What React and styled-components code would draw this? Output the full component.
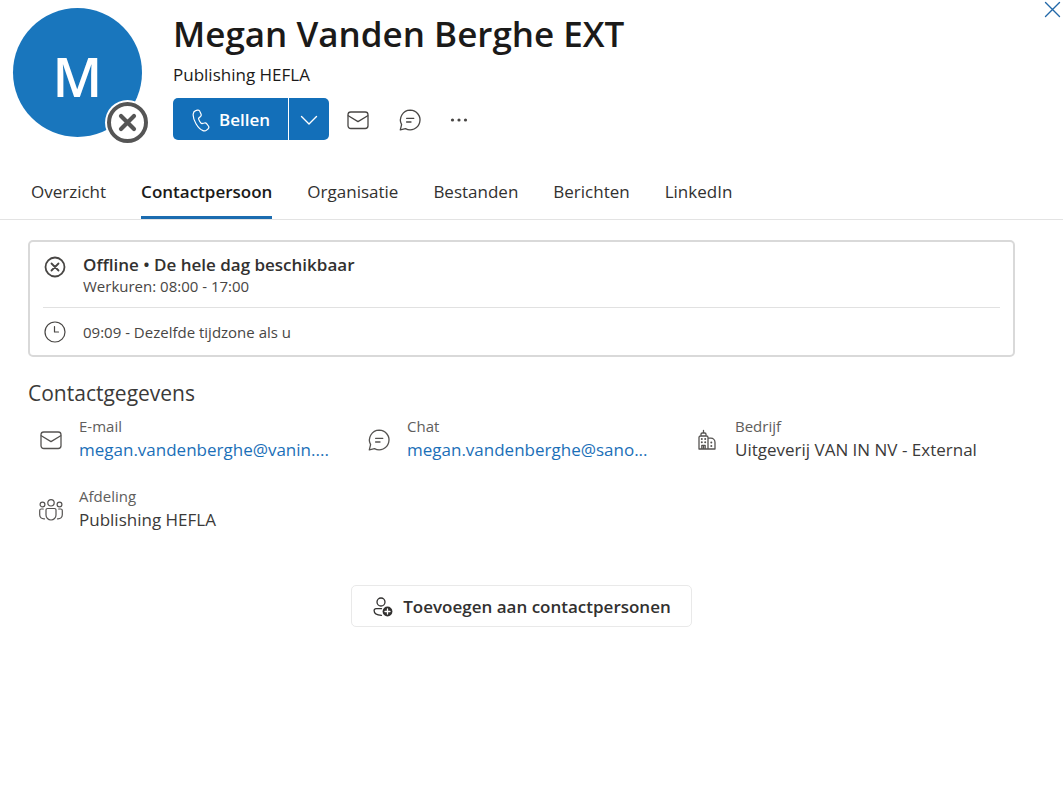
import React from "react";
import styled, { createGlobalStyle } from "styled-components";

const GlobalStyle = createGlobalStyle`
  *, *::before, *::after { box-sizing: border-box; }
  body {
    margin: 0;
    background: #fff;
    color: #242424;
    font-family: "Open Sans", "Noto Sans", sans-serif;
    font-size: 17px;
    line-height: 24px;
  }
  button { font: inherit; color: inherit; background: none; border: 0; padding: 0; cursor: pointer; }
  h1, h2, p, dl, dt, dd { margin: 0; }
  svg { display: block; fill: none; stroke: currentColor; stroke-linecap: round; stroke-linejoin: round; }
`;

const Page = styled.div`
  position: relative;
`;

const CloseButton = styled.button`
  position: absolute;
  top: 0;
  right: 0;
  padding: 1px 2px;
  color: #2268a8;
`;

const Header = styled.header`
  display: flex;
  gap: 31px;
  padding: 8px 40px 0 13px;
`;

const Avatar = styled.div`
  position: relative;
  flex: none;
  display: grid;
  place-items: center;
  width: 129px;
  height: 129px;
  padding-top: 6px;
  border-radius: 50%;
  background: #1976bd;
  color: #fff;
  font-size: 54px;
  font-weight: 600;
`;

const Presence = styled.span`
  position: absolute;
  right: -8px;
  bottom: -8px;
  border-radius: 50%;
  background: #fff;
  color: #555;
`;

const Identity = styled.div`
  min-width: 0;
`;

const Name = styled.h1`
  color: #1b1a19;
  font-size: 35px;
  font-weight: 600;
  line-height: 52px;
`;

const Department = styled.p`
  margin-top: 3px;
  color: #1b1a19;
`;

const Actions = styled.div`
  display: flex;
  align-items: center;
  margin-top: 11px;
`;

const SplitButton = styled.div`
  display: flex;
  height: 42px;
  margin-right: 17px;
  border-radius: 5px;
  overflow: hidden;
  background: #136fb9;
  color: #fff;
`;

const CallButton = styled.button`
  display: flex;
  align-items: center;
  gap: 8px;
  padding: 2px 18px 0 18px;
  font-weight: 600;
`;

const CallMenuButton = styled.button`
  padding: 2px 11px 0;
  border-left: 1px solid #fff;
`;

const IconButton = styled.button`
  margin-right: 28px;
  padding-top: 1px;
  color: #484644;
`;

const Tabs = styled.nav`
  display: flex;
  gap: 35px;
  margin-top: 40px;
  padding: 0 31px;
  border-bottom: 1px solid #e3e3e3;
`;

const Tab = styled.button`
  padding-bottom: 12px;
  border-bottom: 3px solid ${(p) => (p.$active ? "#1b6cb0" : "transparent")};
  color: ${(p) => (p.$active ? "#1b1a19" : "#323130")};
  font-weight: ${(p) => (p.$active ? 600 : 400)};
`;

const Main = styled.main`
  padding: 20px 48px 40px 28px;
`;

const StatusCard = styled.section`
  padding: 12px 13px 11px;
  border: 2px solid #d9d9d9;
  border-radius: 5px;
  color: #484644;
`;

const StatusRow = styled.div`
  display: flex;
  gap: 16px;
  align-items: ${(p) => (p.$center ? "center" : "flex-start")};
  padding: ${(p) => (p.$center ? "12px 0 0" : "0 0 10px")};
  border-top: ${(p) => (p.$center ? "1px solid #e1e1e1" : "0")};
  font-size: 15px;
  line-height: 21px;

  svg { flex: none; margin: ${(p) => (p.$center ? "0" : "1px 0 0")}; }
`;

const StatusTitle = styled.p`
  color: #323130;
  font-size: 17px;
  font-weight: 600;
  line-height: 22px;
`;

const SectionTitle = styled.h2`
  margin: 22px 0 9px;
  color: #3b3a39;
  font-size: 21px;
  font-weight: 400;
  line-height: 28px;
`;

const Details = styled.dl`
  display: grid;
  grid-template-columns: repeat(3, minmax(0, 1fr));
  row-gap: 22px;
  padding-right: 3px;
`;

const Detail = styled.div`
  display: grid;
  grid-template-columns: 45px minmax(0, 1fr);
  column-gap: 6px;
  align-items: center;
  color: #555351;

  svg { justify-self: center; }
`;

const Label = styled.dt`
  color: #605e5c;
  font-size: 15px;
  line-height: 20px;
`;

const Value = styled.dd`
  line-height: 28px;
  white-space: nowrap;
  color: #3b3a39;
`;

const Link = styled.a`
  color: #1b6fb8;
  text-decoration: none;
`;

const AddRow = styled.div`
  display: flex;
  justify-content: center;
  margin-top: 51px;
`;

const AddButton = styled.button`
  display: flex;
  align-items: center;
  gap: 9px;
  height: 42px;
  padding: 1px 20px 0;
  border: 1px solid #e9e9e9;
  border-radius: 5px;
  color: #323130;
  font-weight: 600;
`;

const MailIcon = () => (
  <svg width="24" height="24" viewBox="0 0 24 24" strokeWidth="1.3" aria-hidden="true">
    <rect x="2" y="4" width="20" height="16.5" rx="2.8" />
    <path d="M2.3 7.8 12 13.6l9.700-5.800" />
  </svg>
);

const ChatIcon = () => (
  <svg width="24" height="24" viewBox="0 0 24 24" strokeWidth="1.3" aria-hidden="true">
    <path d="M12.200 2.200a9.800 9.800 0 1 1-4.700 18.400L2.300 21.800l1.300-5.200A9.800 9.800 0 0 1 12.200 2.200Z" />
    <path d="M8.600 10.300h7.200M8.600 14h4.400" />
  </svg>
);

const PhoneIcon = () => (
  <svg width="20" height="24" viewBox="0 0 20 24" strokeWidth="1.200" aria-hidden="true">
    <path d="m4.700 2.700 1.700-.5c1-.3 2.100.2 2.500 1.200l1.100 2.500c.4.900.2 1.900-.5 2.600L7.600 10.200c-.3 1.200 1.900 5.200 3.300 5.500l2.400-.7c.9-.3 1.900 0 2.500.8l1.600 2.200c.6.9.5 2-.2 2.700l-1.300 1.200c-1.100 1-2.600 1.300-3.900.7-2.500-1-4.900-3.300-7-6.900C2.800 12 1.900 8.700 2.200 6c.2-1.600 1.100-2.900 2.500-3.300Z" />
  </svg>
);

const ChevronIcon = () => (
  <svg width="18" height="18" viewBox="0 0 18 18" strokeWidth="1.400" aria-hidden="true">
    <path d="m1.500 5.500 7.500 7.500 7.500-7.500" />
  </svg>
);

const MoreIcon = () => (
  <svg width="18" height="24" viewBox="0 0 18 24" aria-hidden="true">
    <g fill="currentColor" stroke="none">
      <circle cx="2.500" cy="12" r="1.600" />
      <circle cx="9" cy="12" r="1.600" />
      <circle cx="15.500" cy="12" r="1.600" />
    </g>
  </svg>
);

const CloseIcon = () => (
  <svg width="17" height="17" viewBox="0 0 17 17" strokeWidth="1.400" aria-hidden="true">
    <path d="m1.500 1.500 14 14M15.500 1.500l-14 14" />
  </svg>
);

const PresenceIcon = () => (
  <svg width="45" height="45" viewBox="0 0 45 45" aria-hidden="true">
    <circle cx="22.500" cy="22.500" r="18.500" strokeWidth="4" />
    <path d="m16 16 13 13M29 16 16 29" strokeWidth="4.200" />
  </svg>
);

const OfflineIcon = () => (
  <svg width="24" height="24" viewBox="0 0 24 24" aria-hidden="true">
    <circle cx="12" cy="12" r="9.500" strokeWidth="1.800" />
    <path d="m8.500 8.500 7 7M15.500 8.500l-7 7" strokeWidth="1.800" />
  </svg>
);

const ClockIcon = () => (
  <svg width="24" height="24" viewBox="0 0 24 24" strokeWidth="1.200" aria-hidden="true">
    <circle cx="12" cy="12" r="10" />
    <path d="M11.500 6.500V12h4" />
  </svg>
);

const BuildingIcon = () => (
  <svg width="24" height="24" viewBox="0 0 24 24" strokeWidth="1.300" aria-hidden="true">
    <path d="M4 21V9.500C4 8.700 4.600 8 5.400 8h6.200c.8 0 1.400.7 1.400 1.500V21M6 8V6.300C6 5.500 6.500 5 7.200 5h2.600c.7 0 1.200.5 1.200 1.300V8M8.500 5V2.500M4 21h16v-6.500c0-2.400-1.800-4.300-4.200-4.300H13M6.800 21v-3.700h3.400V21M8.500 17.500V21" />
    <g fill="currentColor" stroke="none">
      <circle cx="6.800" cy="11" r="1" /><circle cx="10.200" cy="11" r="1" />
      <circle cx="6.800" cy="14.300" r="1" /><circle cx="10.200" cy="14.300" r="1" />
      <circle cx="16.300" cy="14.500" r="1" /><circle cx="16.300" cy="18" r="1" />
    </g>
  </svg>
);

const PeopleIcon = () => (
  <svg width="26" height="24" viewBox="0 0 26 24" strokeWidth="1.200" aria-hidden="true">
    <circle cx="13" cy="4.800" r="3.200" />
    <circle cx="4.500" cy="6.500" r="2.400" />
    <circle cx="21.500" cy="6.500" r="2.400" />
    <path d="M9.500 10.500h7c.8 0 1.500.7 1.500 1.500v5a5 5 0 0 1-10 0v-5c0-.8.700-1.500 1.500-1.500ZM5.300 11H3.200c-.8 0-1.500.7-1.500 1.500v4.300c0 2.600 1.900 4.200 4.800 4M20.700 11h2.100c.8 0 1.500.7 1.500 1.500v4.300c0 2.600-1.900 4.200-4.800 4" />
  </svg>
);

const AddPersonIcon = () => (
  <svg width="22" height="22" viewBox="0 0 22 22" strokeWidth="1.300" aria-hidden="true">
    <circle cx="9" cy="6" r="4" />
    <path d="M9.500 12.700H4a1.900 1.900 0 0 0-1.900 1.900c0 3 2.700 4.700 7.400 4.700" />
    <circle cx="15.500" cy="15.500" r="4.900" fill="currentColor" stroke="none" />
    <path d="M15.500 13v5M13 15.500h5" stroke="#fff" />
  </svg>
);

const tabs = ["Overzicht", "Contactpersoon", "Organisatie", "Bestanden", "Berichten", "LinkedIn"];

const details = [
  { icon: MailIcon, label: "E-mail", value: "megan.vandenberghe@vanin....", href: "#email" },
  { icon: ChatIcon, label: "Chat", value: "megan.vandenberghe@sano...", href: "#chat" },
  { icon: BuildingIcon, label: "Bedrijf", value: "Uitgeverij VAN IN NV - External" },
  { icon: PeopleIcon, label: "Afdeling", value: "Publishing HEFLA" },
];

export default function App() {
  return (
    <Page>
      <GlobalStyle />
      <CloseButton aria-label="Sluiten"><CloseIcon /></CloseButton>
      <Header>
        <Avatar>
          M
          <Presence><PresenceIcon /></Presence>
        </Avatar>
        <Identity>
          <Name>Megan Vanden Berghe EXT</Name>
          <Department>Publishing HEFLA</Department>
          <Actions>
            <SplitButton>
              <CallButton><PhoneIcon />Bellen</CallButton>
              <CallMenuButton aria-label="Meer belopties"><ChevronIcon /></CallMenuButton>
            </SplitButton>
            <IconButton aria-label="E-mail"><MailIcon /></IconButton>
            <IconButton aria-label="Chat"><ChatIcon /></IconButton>
            <IconButton aria-label="Meer"><MoreIcon /></IconButton>
          </Actions>
        </Identity>
      </Header>
      <Tabs>
        {tabs.map((tab) => (
          <Tab key={tab} $active={tab === "Contactpersoon"}>{tab}</Tab>
        ))}
      </Tabs>
      <Main>
        <StatusCard>
          <StatusRow>
            <OfflineIcon />
            <div>
              <StatusTitle>Offline • De hele dag beschikbaar</StatusTitle>
              <p>Werkuren: 08:00 - 17:00</p>
            </div>
          </StatusRow>
          <StatusRow $center>
            <ClockIcon />
            <p>09:09 - Dezelfde tijdzone als u</p>
          </StatusRow>
        </StatusCard>
        <SectionTitle>Contactgegevens</SectionTitle>
        <Details>
          {details.map(({ icon: Icon, label, value, href }) => (
            <Detail key={label}>
              <Icon />
              <div>
                <Label>{label}</Label>
                <Value>{href ? <Link href={href}>{value}</Link> : value}</Value>
              </div>
            </Detail>
          ))}
        </Details>
        <AddRow>
          <AddButton><AddPersonIcon />Toevoegen aan contactpersonen</AddButton>
        </AddRow>
      </Main>
    </Page>
  );
}
